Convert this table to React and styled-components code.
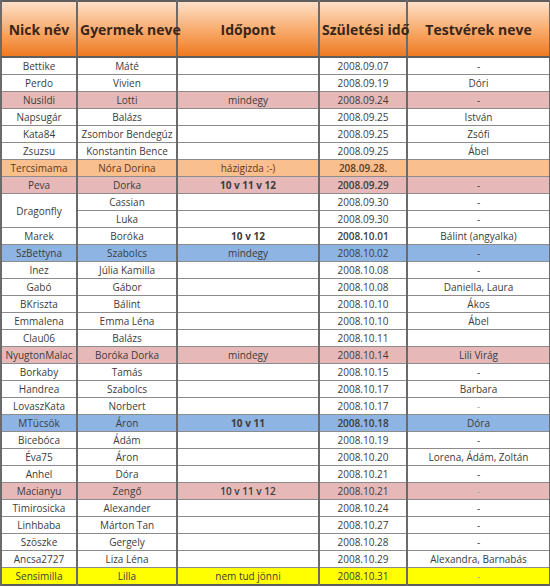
import * as React from "react";
import styled, { createGlobalStyle } from "styled-components";

const GlobalStyle = createGlobalStyle`
  html, body {
    margin: 0;
    padding: 0;
    background: #ffffff;
  }
`;

const tones = {
  pink: "#e6b9b8",
  orange: "#fabf8f",
  blue: "#8eb4e3",
  yellow: "#ffff00",
};

const Sheet = styled.table`
  border-collapse: collapse;
  width: 549px;
  table-layout: fixed;
  font-family: "Open Sans", "Noto Sans", sans-serif;
  font-size: 10px;
  color: #3c3c3c;
  border-top: 2px solid #5e5e5e;
  border-bottom: 2px solid #5e5e5e;
`;

const HeadCell = styled.th`
  height: 54px;
  padding: 0 2px;
  background: linear-gradient(to bottom, #fde0c8 0%, #f8a868 55%, #ef7a22 100%);
  border-left: 2px solid #6a6a6a;
  border-right: 2px solid #6a6a6a;
  border-bottom: 2px solid #5e5e5e;
  color: #3a2619;
  font-size: 14px;
  font-weight: 700;
  white-space: nowrap;
  text-align: center;
  vertical-align: middle;
`;

const Row = styled.tr`
  background: ${(p) => (p.$tone ? tones[p.$tone] : "#ffffff")};
`;

const Cell = styled.td`
  height: 16px;
  line-height: 16px;
  padding: 0 2px;
  text-align: center;
  white-space: nowrap;
  overflow: hidden;
  border-left: 2px solid #6a6a6a;
  border-right: 2px solid #6a6a6a;
  border-top: 1px solid #8c8c8c;
  border-bottom: 1px solid #8c8c8c;
  font-weight: ${(p) => (p.$bold ? 700 : p.$semi ? 600 : 400)};
  color: ${(p) => (p.$faint ? "#a8a8a8" : p.$brown ? "#5a3a1a" : "#3c3c3c")};
`;

const rows = [
  { nick: "Bettike", kid: "Máté", time: "", born: "2008.09.07", sib: "-" },
  { nick: "Perdo", kid: "Vivien", time: "", born: "2008.09.19", sib: "Dóri" },
  { nick: "Nusildi", kid: "Lotti", time: "mindegy", born: "2008.09.24", sib: "-", tone: "pink" },
  { nick: "Napsugár", kid: "Balázs", time: "", born: "2008.09.25", sib: "István" },
  { nick: "Kata84", kid: "Zsombor Bendegúz", time: "", born: "2008.09.25", sib: "Zsófi" },
  { nick: "Zsuzsu", kid: "Konstantin Bence", time: "", born: "2008.09.25", sib: "Ábel" },
  { nick: "Tercsimama", kid: "Nóra Dorina", time: "házigizda :-)", born: "208.09.28.", sib: "", tone: "orange", brown: true },
  { nick: "Peva", kid: "Dorka", time: "10 v 11 v 12", born: "2008.09.29", sib: "-", tone: "pink", bold: true },
  { nick: "Dragonfly", kid: "Cassian", time: "", born: "2008.09.30", sib: "-", span: 2 },
  { kid: "Luka", time: "", born: "2008.09.30", sib: "-", spanned: true },
  { nick: "Marek", kid: "Boróka", time: "10 v 12", born: "2008.10.01", sib: "Bálint (angyalka)", bold: true },
  { nick: "SzBettyna", kid: "Szabolcs", time: "mindegy", born: "2008.10.02", sib: "-", tone: "blue" },
  { nick: "Inez", kid: "Júlia Kamilla", time: "", born: "2008.10.08", sib: "-" },
  { nick: "Gabó", kid: "Gábor", time: "", born: "2008.10.08", sib: "Daniella, Laura" },
  { nick: "BKriszta", kid: "Bálint", time: "", born: "2008.10.10", sib: "Ákos" },
  { nick: "Emmalena", kid: "Emma Léna", time: "", born: "2008.10.10", sib: "Ábel" },
  { nick: "Clau06", kid: "Balázs", time: "", born: "2008.10.11", sib: "" },
  { nick: "NyugtonMalac", kid: "Boróka Dorka", time: "mindegy", born: "2008.10.14", sib: "Lili Virág", tone: "pink" },
  { nick: "Borkaby", kid: "Tamás", time: "", born: "2008.10.15", sib: "-" },
  { nick: "Handrea", kid: "Szabolcs", time: "", born: "2008.10.17", sib: "Barbara" },
  { nick: "LovaszKata", kid: "Norbert", time: "", born: "2008.10.17", sib: "-", faintSib: true },
  { nick: "MTücsök", kid: "Áron", time: "10 v 11", born: "2008.10.18", sib: "Dóra", tone: "blue", bold: true },
  { nick: "Bicebóca", kid: "Ádám", time: "", born: "2008.10.19", sib: "-" },
  { nick: "Éva75", kid: "Áron", time: "", born: "2008.10.20", sib: "Lorena, Ádám, Zoltán" },
  { nick: "Anhel", kid: "Dóra", time: "", born: "2008.10.21", sib: "-" },
  { nick: "Macianyu", kid: "Zengő", time: "10 v 11 v 12", born: "2008.10.21", sib: "-", tone: "pink", faintSib: true, semi: true },
  { nick: "Timirosicka", kid: "Alexander", time: "", born: "2008.10.24", sib: "-" },
  { nick: "Linhbaba", kid: "Márton Tan", time: "", born: "2008.10.27", sib: "-" },
  { nick: "Szöszke", kid: "Gergely", time: "", born: "2008.10.28", sib: "-" },
  { nick: "Ancsa2727", kid: "Liza Léna", time: "", born: "2008.10.29", sib: "Alexandra, Barnabás" },
  { nick: "Sensimilla", kid: "Lilla", time: "nem tud jönni", born: "2008.10.31", sib: "-", tone: "yellow", faintSib: true },
];

export default function App() {
  return (
    <>
      <GlobalStyle />
      <Sheet>
        <colgroup>
          <col style={{ width: 76 }} />
          <col style={{ width: 100 }} />
          <col style={{ width: 142 }} />
          <col style={{ width: 88 }} />
          <col style={{ width: 143 }} />
        </colgroup>
        <thead>
          <tr>
            <HeadCell>Nick név</HeadCell>
            <HeadCell>Gyermek neve</HeadCell>
            <HeadCell>Időpont</HeadCell>
            <HeadCell>Születési idő</HeadCell>
            <HeadCell>Testvérek neve</HeadCell>
          </tr>
        </thead>
        <tbody>
          {rows.map((r, i) => (
            <Row key={i} $tone={r.tone}>
              {!r.spanned && (
                <Cell rowSpan={r.span || 1} $brown={r.brown}>
                  {r.nick}
                </Cell>
              )}
              <Cell $brown={r.brown}>{r.kid}</Cell>
              <Cell $bold={r.bold} $semi={r.semi} $brown={r.brown}>{r.time}</Cell>
              <Cell $semi={r.bold || r.brown} $brown={r.brown}>{r.born}</Cell>
              <Cell $faint={r.faintSib} $brown={r.brown}>{r.sib}</Cell>
            </Row>
          ))}
        </tbody>
      </Sheet>
    </>
  );
}
